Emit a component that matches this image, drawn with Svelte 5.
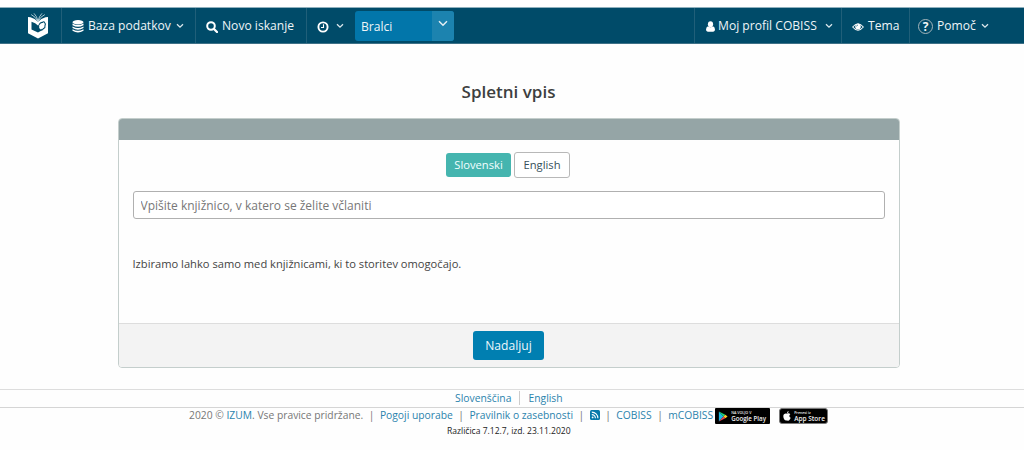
<script lang="ts">
  let library = $state("");
  let lang = $state("sl");
</script>

{#snippet chevron()}
  <svg class="chevron" viewBox="0 0 8 6"><path d="M1 1.2 4 4.2 7 1.2" /></svg>
{/snippet}

<nav class="navbar">
  <a class="brand" href="/" aria-label="COBISS">
    <svg viewBox="0 0 22 27">
      <path d="M1 5 3.5 5.2Q8 6.4 11 9.8 14 6.4 18.5 5.2L21 5V21.2L11 26.5 1 21.2Z" fill="#fff" />
      <path d="M11 9.5Q8.5 4.5 4.2 2.6M11 9Q9.8 4 7 1.4M11 9.5Q13.5 4.5 17.8 2.6M11 9Q12.2 4 15 1.4" fill="none" stroke="#d2e3ea" stroke-width=".8" />
      <path d="M4.5 9.8Q8.5 10.8 11 13.4L12.2 12.4V16L13.6 17.6 15 16.8 14.6 18.6 11 20.6 4.5 17.6Z" fill="#004b69" />
      <path d="M12 12.8Q13.5 10 15.5 10.4 16.8 9 17.6 10.6 19 12 18 13.6 18.4 15.8 16.6 16.4 15.4 18.2 14.2 18.2" fill="none" stroke="#004b69" stroke-width="1.1" />
    </svg>
  </a>
  <a class="item database" href="#baza">
    <svg class="icon" viewBox="0 0 12 13">
      <g fill="#fff"><ellipse cx="6" cy="2.3" rx="5.5" ry="2.2" /><path d="M.5 3.6Q6 6.6 11.5 3.6V5.3Q6 8.4.5 5.3ZM.5 6.4Q6 9.4 11.5 6.4V8.1Q6 11.2.5 8.1ZM.5 9.2Q6 12.2 11.5 9.2V10.7Q6 14.3.5 10.7Z" /></g>
    </svg>
    <span>Baza podatkov</span>
    {@render chevron()}
  </a>
  <a class="item search" href="#iskanje">
    <svg class="icon" viewBox="0 0 12 12"><circle cx="5" cy="5" r="3.8" fill="none" stroke="#fff" stroke-width="2" /><path d="m8 8 3 3" stroke="#fff" stroke-width="2.3" stroke-linecap="round" /></svg>
    <span>Novo iskanje</span>
  </a>
  <a class="item history" href="#zgodovina" aria-label="Zgodovina">
    <svg class="icon" viewBox="0 0 12 12"><circle cx="6" cy="6" r="4.6" fill="none" stroke="#fff" stroke-width="1.9" /><path d="M6.5 3.2V6.5H4" fill="none" stroke="#fff" stroke-width="1.1" /></svg>
    {@render chevron()}
  </a>
  <button class="picker">
    <span>Bralci</span>
    <i><svg viewBox="0 0 10 7"><path d="m1 1.3 4 4 4-4" /></svg></i>
  </button>

  <a class="item profile" href="#profil">
    <svg class="icon" viewBox="0 0 10 12"><ellipse cx="5" cy="3.6" rx="2.9" ry="3.3" fill="#fff" /><path d="M2.2 5.8Q5 8 7.8 5.8 10 6.4 10 9.7 10 11.7 8 11.7H2Q0 11.7 0 9.7 0 6.4 2.2 5.8Z" fill="#fff" /></svg>
    <span>Moj profil COBISS</span>
    {@render chevron()}
  </a>
  <a class="item theme" href="#tema">
    <svg class="icon" viewBox="0 0 13 10"><path d="M.7 5Q6.5-2.2 12.3 5 6.5 12 .7 5Z" fill="none" stroke="#fff" stroke-width="1.1" /><circle cx="6.5" cy="4.6" r="3" fill="#fff" /><path d="M4.9 4.4Q5 3 6.4 2.9" fill="none" stroke="#004b69" stroke-width=".7" /></svg>
    <span>Tema</span>
  </a>
  <a class="item help" href="#pomoc">
    <b class="question">?</b>
    <span>Pomoč</span>
    {@render chevron()}
  </a>
</nav>

<main>
  <h1>Spletni vpis</h1>
  <section class="panel">
    <div class="panel-heading"></div>
    <div class="panel-body">
      <div class="languages">
        <button class="active" onclick={() => (lang = "sl")}>Slovenski</button>
        <button onclick={() => (lang = "en")}>English</button>
      </div>
      <input bind:value={library} placeholder="Vpišite knjižnico, v katero se želite včlaniti" />
      <p>Izbiramo lahko samo med knjižnicami, ki to storitev omogočajo.</p>
    </div>
    <div class="panel-footer"><button>Nadaljuj</button></div>
  </section>
</main>

<footer>
  <div class="site-languages"><a href="#sl">Slovenščina</a><a href="#en">English</a></div>
  <div class="links">
    <span class="copyright">2020 © <a href="#izum">IZUM</a>. Vse pravice pridržane.</span>
    <span class="bar">|</span>
    <a href="#pogoji">Pogoji uporabe</a>
    <span class="bar">|</span>
    <a href="#zasebnost">Pravilnik o zasebnosti</a>
    <span class="bar">|</span>
    <svg class="rss" viewBox="0 0 10 10"><rect width="10" height="10" rx="1.5" fill="#0879aa" /><circle cx="2.6" cy="7.4" r=".9" fill="#fff" /><path d="M1.8 4.6A3.6 3.6 0 0 1 5.4 8.2M1.8 2.1A6.1 6.1 0 0 1 7.9 8.2" fill="none" stroke="#fff" stroke-width="1.1" /></svg>
    <span class="bar">|</span>
    <a href="#cobiss">COBISS</a>
    <span class="bar">|</span>
    <a href="#mcobiss">mCOBISS</a>
    <a class="store google" href="#google">
      <svg viewBox="0 0 10 12"><path d="M.5.5V11.5L5.5 6Z" fill="#18b9e8" /><path d="M.5.5 7.5 4.2 5.5 6Z" fill="#20d477" /><path d="M.5 11.5 5.5 6 7.5 7.8Z" fill="#ef4051" /><path d="M7.5 4.2 10 6 7.5 7.8 5.5 6Z" fill="#ffc927" /></svg>
      <span><small>NA VOLJO V</small>Google Play</span>
    </a>
    <a class="store apple" href="#apple">
      <svg viewBox="0 0 8 10"><path d="M4 2.7C5 2.1 6.6 2.1 7.3 3.3 5.9 4.2 6.1 6 7.7 6.7 7 8.6 5.9 10.3 4.2 9.4 2 10.4.3 7.6.3 5.3.3 2.7 2.4 1.9 4 2.7ZM3.9 2.2Q4 .4 5.7 0 5.7 1.8 3.9 2.2Z" fill="#fff" /></svg>
      <span><small>Prenesi iz</small>App Store</span>
    </a>
  </div>
  <div class="version">Različica 7.12.7, izd. 23.11.2020</div>
</footer>

<style>
  :global(body) { background: #fefefe; color: #444; font-family: "Open Sans", sans-serif; }
  * { box-sizing: border-box; }
  a { color: #2b83ad; text-decoration: none; }
  button, input { font-family: inherit; }
  button { padding: 0; border: 0; }
  .navbar { display: flex; height: 37px; margin-top: 7px; background: #004b69; border-top: 1px solid #8fb0bd; border-bottom: 1px solid #3e7187; }
  .brand { width: 62px; padding: 4px 0 0 27px; border-right: 1px solid #205f79; }
  .brand svg { display: block; width: 22px; height: 27px; }
  .item { display: flex; align-items: center; height: 35px; color: #eef5f8; font-size: 12.1px; white-space: nowrap; }
  .icon { flex: none; display: block; margin-top: 2px; }
  .chevron { flex: none; width: 8px; height: 6px; margin-top: 1px; fill: none; stroke: #dbe8ed; stroke-width: 1.3; }
  .database { width: 134px; padding-left: 10px; border-right: 1px solid #205f79; }
  .database .icon { width: 12px; height: 13px; margin-right: 4px; }
  .database .chevron { margin-left: 5px; }
  .search { width: 111px; padding-left: 10px; border-right: 1px solid #205f79; }
  .search .icon { width: 12px; height: 12px; margin-right: 4px; }
  .history { width: 48px; padding-left: 10px; }
  .history .icon { width: 12px; height: 12px; }
  .history .chevron { margin-left: 7px; }
  .picker { display: flex; align-items: center; width: 99px; height: 30px; margin-top: 3px; overflow: hidden; border-radius: 3px; background: #0276aa; color: #eef5f8; font-size: 12.1px; }
  .picker span { flex: 1; padding-left: 6px; text-align: left; }
  .picker i { width: 22px; height: 100%; padding-top: 9px; background: #1c83af; }
  .picker svg { display: block; width: 10px; height: 7px; margin: 0 auto; fill: none; stroke: #e2edf3; stroke-width: 1.5; }
  .profile { width: 147px; margin-left: auto; padding-left: 11px; border-left: 1px solid #205f79; }
  .profile .icon { width: 9px; height: 11px; margin-right: 3px; }
  .profile .chevron { margin-left: 8px; }
  .theme { width: 68px; padding-left: 10px; border-left: 1px solid #205f79; }
  .theme .icon { width: 12px; height: 10px; margin-right: 4px; }
  .help { width: 115px; padding-left: 8px; border-left: 1px solid #205f79; }
  .help .chevron { margin-left: 5px; }
  .question { width: 15px; height: 15px; margin: 2px 4px 0 0; border: 1px solid #a4b5bb; border-radius: 50%; font-size: 12px; line-height: 13px; text-align: center; }
  main { width: 782px; margin: 0 0 0 117.5px; }
  h1 { height: 73.5px; margin: 0; padding-top: 35.5px; color: #3d3f40; font-size: 17px; font-weight: 600; line-height: 24px; text-align: center; }
  .panel { height: 250px; overflow: hidden; border: 1px solid #c4cecc; border-radius: 4px; background: #fefefe; }
  .panel-heading { height: 21px; background: #95a5a6; }
  .panel-body { height: 183.5px; padding: 12.4px 14px 0; }
  .languages { display: flex; justify-content: center; gap: 3px; height: 26px; padding-right: 1px; }
  .languages button { width: 56px; height: 26px; padding-bottom: 1px; border: 1px solid #b8b8b8; border-radius: 3px; background: #fff; color: #36505b; font-size: 11.2px; }
  .languages .active { width: 65px; height: 24px; margin-top: 1px; border: 0; background: #45b5af; color: #f2ffff; }
  input { display: block; width: 100%; height: 28px; margin-top: 13.6px; padding: 0 7px; border: 1px solid #b0b0b0; border-radius: 3px; background: #fff; font-size: 12px; }
  input::placeholder { color: #777; opacity: 1; }
  p { margin: 35.5px 0 0; font-size: 11.15px; line-height: 18px; }
  .panel-footer { height: 44px; padding-top: 7px; border-top: 1px solid #ddd; background: #f3f3f3; text-align: center; }
  .panel-footer button { width: 71px; height: 29px; padding-bottom: 1px; border-radius: 3px; background: #007fb1; color: #eef8fc; font-size: 12.1px; }
  footer { margin-top: 21.5px; font-size: 10.35px; }
  .site-languages { display: flex; height: 19px; padding-left: 455px; border-top: 1px solid #ddd; border-bottom: 1px solid #d5d5d5; line-height: 17px; }
  .site-languages a + a { height: 14px; margin: 1px 0 0 8px; padding-left: 8px; border-left: 1px solid #ccc; line-height: 15px; }
  .links { display: flex; align-items: center; height: 16px; padding-left: 189px; white-space: nowrap; color: #777; font-size: 10.3px; line-height: 14px; }
  .links > a:not(.store), .copyright, .bar { padding-bottom: 2px; }
  .bar { margin: 0 5.5px; color: #777; }
  .rss { width: 10px; height: 10px; margin-bottom: 2px; }
  .store { display: flex; align-items: center; width: 55px; height: 16px; margin-left: 2px; border-radius: 1px; background: #000; color: #f1f1f1; font-size: 6.2px; font-weight: 600; line-height: 7px; }
  .store svg { flex: none; width: 10px; height: 11px; margin: 0 3px 0 3px; }
  .store small { display: block; font-size: 3.6px; line-height: 4px; }
  .apple { width: 49px; margin-left: 9px; border: 1px solid #777; border-radius: 3px; font-size: 6.5px; }
  .apple svg { width: 8px; height: 10px; }
  .version { margin-left: 447px; padding-top: 1px; color: #222; font-size: 8.55px; line-height: 12px; }
</style>
